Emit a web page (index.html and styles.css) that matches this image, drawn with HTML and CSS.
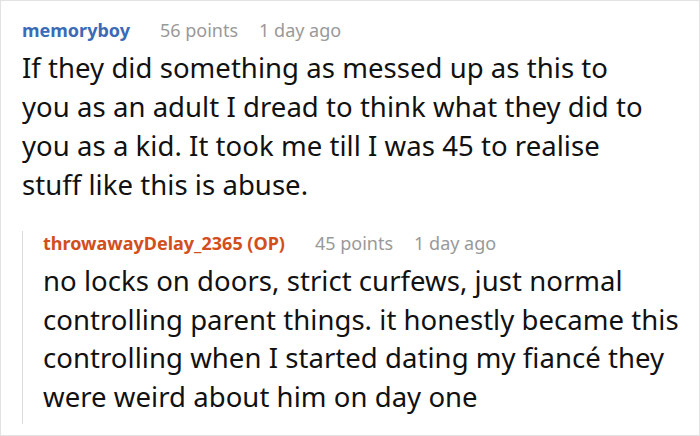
FILE: index.html
```html
<!DOCTYPE html>
<html>
<head>
<meta charset="utf-8">
<link rel="stylesheet" href="styles.css">
</head>
<body>
<div class="card">
  <div class="comment">
    <div class="meta">
      <span class="author">memoryboy</span>
      <span class="points">56 points</span>
      <span class="time">1 day ago</span>
    </div>
    <p class="text">If they did something as messed up as this to<br>you as an adult I dread to think what they did to<br>you as a kid. It took me till I was 45 to realise<br>stuff like this is abuse.</p>
  </div>
  <div class="reply">
    <div class="meta">
      <span class="author op">throwawayDelay_2365 (OP)</span>
      <span class="points">45 points</span>
      <span class="time">1 day ago</span>
    </div>
    <p class="text">no locks on doors, strict curfews, just normal<br>controlling parent things. it honestly became this<br>controlling when I started dating my fiancé they<br>were weird about him on day one</p>
  </div>
</div>
</body>
</html>
```

FILE: styles.css
```css
html, body {
  margin: 0;
  padding: 0;
  background: #ffffff;
}
body {
  font-family: "Noto Sans", "Open Sans", sans-serif;
  color: #111;
}
.card {
  box-sizing: border-box;
  width: 700px;
  height: 436px;
  border: 1px solid #e2e2e2;
  padding: 17px 0 0 21px;
  overflow: hidden;
}
.meta {
  display: flex;
  gap: 30px;
  font-size: 18px;
  line-height: 24px;
  color: #999;
  white-space: nowrap;
}
.points {
  margin-right: -9px;
}
.author {
  font-weight: 700;
  color: #3a6bb7;
}
.author.op {
  color: #d24e1c;
}
.text {
  margin: 6px 0 0;
  font-size: 27.5px;
  letter-spacing: 0.05px;
  line-height: 39px;
  white-space: nowrap;
}
.reply {
  margin-top: 46px;
  border-left: 1px solid #dcdcdc;
  padding: 0 0 8px 20px;
}
.reply .meta {
  margin-top: -19px;
}
.reply .text {
  margin-top: 7px;
  line-height: 38.5px;
}
```
